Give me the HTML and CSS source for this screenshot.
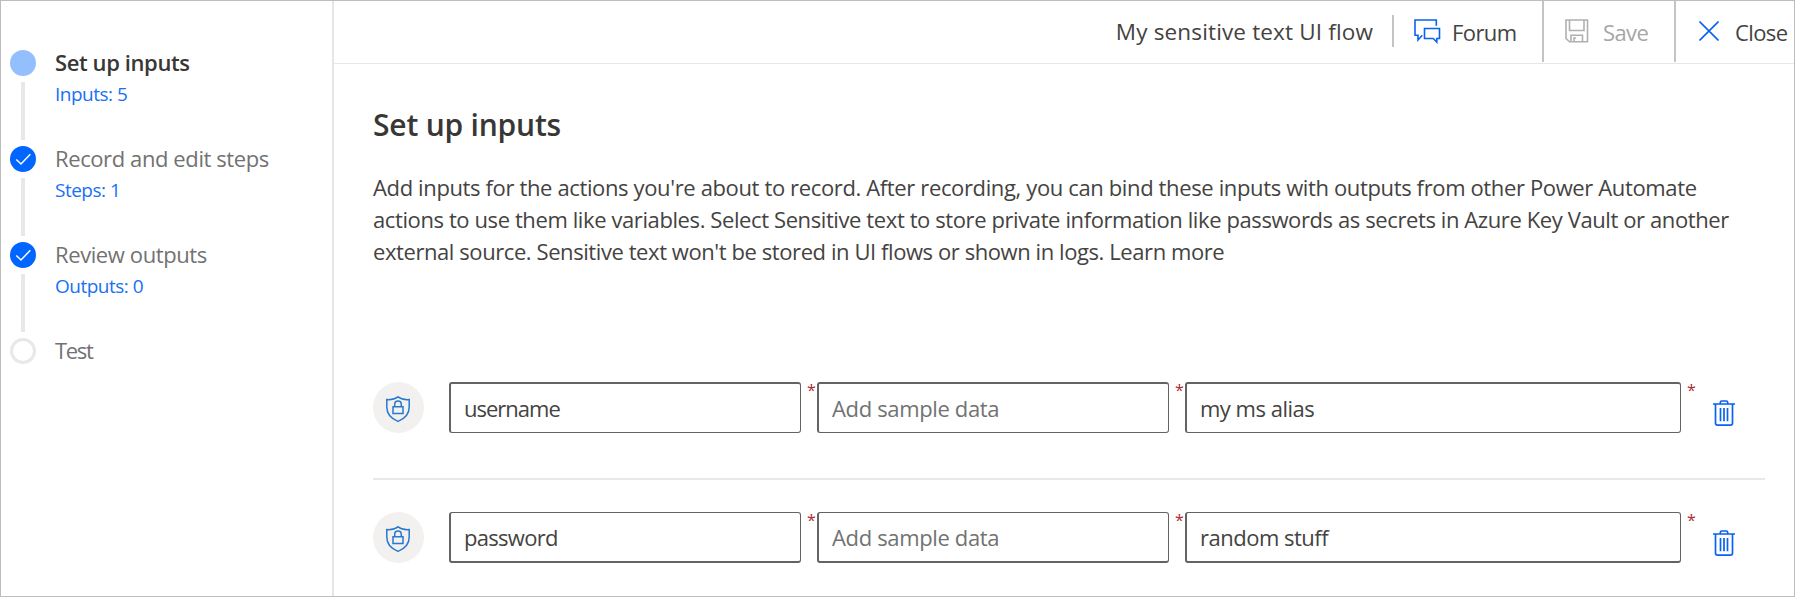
FILE: index.html
```
<!DOCTYPE html>
<html lang="en">
<head>
<meta charset="utf-8">
<title>My sensitive text UI flow</title>
<link rel="stylesheet" href="styles.css">
</head>
<body>
<svg class="defs" aria-hidden="true">
  <symbol id="shield" viewBox="0 0 26 28">
    <path d="M13 1.8C10.3 3.8 5.5 4.9 1.8 4.6V12C1.8 18.5 6.5 23.8 13 26.4C19.5 23.8 24.2 18.500 24.200 12V4.600C20.500 4.900 15.700 3.800 13 1.800Z"/>
    <path d="M8 11.800H18V18.500H8Z"/>
    <path d="M9.700 11.800V9.400A3.300 3.300 0 0 1 16.300 9.400V11.800"/>
  </symbol>
  <symbol id="trash" viewBox="0 0 22 26">
    <path d="M0 4H22M7.300 4V2.500Q7.300 1 8.800 1H13.200Q14.700 1 14.700 2.500V4M2.500 4V23Q2.500 25.100 4.600 25.100H17.400Q19.500 25.100 19.500 23V4"/>
    <path d="M7.500 8V21.200M11 8V21.200M14.500 8V21.200"/>
  </symbol>
  <symbol id="check" viewBox="0 0 26 26">
    <path d="M6.300 13.500L11 18L20.300 8.300"/>
  </symbol>
</svg>
<div class="page">
  <nav class="sidebar">
    <div class="step current">
      <div class="rail"><span class="dot"></span><span class="line"></span></div>
      <div class="label"><div class="name">Set up inputs</div><a class="count">Inputs: 5</a></div>
    </div>
    <div class="step done">
      <div class="rail"><span class="dot"><svg><use href="#check"/></svg></span><span class="line"></span></div>
      <div class="label"><div class="name">Record and edit steps</div><a class="count">Steps: 1</a></div>
    </div>
    <div class="step done">
      <div class="rail"><span class="dot"><svg><use href="#check"/></svg></span><span class="line"></span></div>
      <div class="label"><div class="name">Review outputs</div><a class="count">Outputs: 0</a></div>
    </div>
    <div class="step">
      <div class="rail"><span class="dot"></span></div>
      <div class="label"><div class="name short">Test</div></div>
    </div>
  </nav>
  <div class="main">
    <header class="topbar">
      <span class="flow-title">My sensitive text UI flow</span>
      <span class="divider"></span>
      <div class="action forum">
        <svg class="icon" width="28" height="26" viewBox="0 0 28 26"><path d="M23.300 7.800V2H2V17.300H5V22L9.300 17.300M11.500 10.500H26.500V20.500H23.800V24L20.200 20.500H11.500Z"/></svg>
        <span>Forum</span>
      </div>
      <div class="action save">
        <svg class="icon" width="24" height="24" viewBox="0 0 24 24"><path d="M1 1H22.500V22.800H4.500L1 19.500ZM4.500 1V11.500H19V1M6 22.800V16.300H17.500V22.800M9 22.800V19H11"/></svg>
        <span>Save</span>
      </div>
      <div class="action close">
        <svg class="icon" width="20" height="20" viewBox="0 0 20 20"><path d="M.5.5L19.500 19.500M19.500.5L.5 19.500"/></svg>
        <span>Close</span>
      </div>
    </header>
    <main class="content">
      <h1>Set up inputs</h1>
      <p><span class="lead">Add inputs for the actions you're about to record. After recording, you can bind these inputs with outputs from other Power Automate</span><br>actions to use them like variables. Select Sensitive text to store private information like passwords as secrets in Azure Key Vault or another<br><span class="tail">external source. Sensitive text won't be stored in UI flows or shown in logs. <a>Learn more</a></span></p>
      <div class="row first">
        <span class="type"><svg class="icon"><use href="#shield"/></svg></span>
        <input class="username" value="username"><span class="req">*</span>
        <input placeholder="Add sample data"><span class="req">*</span>
        <input class="wide" value="my ms alias"><span class="req">*</span>
        <svg class="icon trash"><use href="#trash"/></svg>
      </div>
      <div class="row second">
        <span class="type"><svg class="icon"><use href="#shield"/></svg></span>
        <input class="password" value="password"><span class="req">*</span>
        <input placeholder="Add sample data"><span class="req">*</span>
        <input class="wide" value="random stuff"><span class="req">*</span>
        <svg class="icon trash"><use href="#trash"/></svg>
      </div>
    </main>
  </div>
</div>
</body>
</html>
```
FILE: styles.css
```
* { box-sizing: border-box; }
body {
  margin: 0;
  font: 22px/32px "Open Sans", "Noto Sans", sans-serif;
  letter-spacing: -0.4px;
  color: #444341;
  background: #fff;
}
svg { display: block; fill: none; }
.defs { position: absolute; width: 0; height: 0; }
.page {
  display: flex;
  width: 1795px;
  height: 597px;
  border: 1px solid #bdbdbd;
  overflow: hidden;
}

/* Step navigation */
.sidebar {
  flex: none;
  width: 333px;
  padding: 49px 0 0 9px;
  border-right: 2px solid #e6e6e6;
}
.step { display: flex; gap: 19px; height: 96px; }
.rail { display: flex; flex-direction: column; align-items: center; gap: 6px; width: 26px; }
.dot { width: 26px; height: 26px; border-radius: 50%; border: 3px solid #e8e8e8; }
.current .dot { border: 0; background: #94bfff; }
.done .dot { border: 0; background: #0066ff; }
.dot svg { width: 26px; height: 26px; stroke: #fff; stroke-width: 1.5; }
.line { width: 4px; height: 58px; background: #e8e8e8; }
.name { line-height: 24px; color: #727272; white-space: nowrap; }
.name.short { letter-spacing: -1.3px; }
.current .name { font-weight: 600; color: #383736; }
.count { display: block; margin-top: 7px; font-size: 19px; line-height: 26px; letter-spacing: -.5px; color: #1870f5; }

/* Top bar */
.main { flex: 1; min-width: 0; }
.topbar {
  display: flex;
  justify-content: flex-end;
  align-items: center;
  height: 63px;
  border-bottom: 1px solid #e6e6e6;
}
.flow-title { margin-right: 19px; font-size: 22.5px; letter-spacing: .15px; }
.divider { width: 2px; height: 32px; margin-top: -2px; background: #c4c4c4; }
.action { display: flex; align-items: center; height: 61px; align-self: flex-start; }
.action span { letter-spacing: -.6px; }
.icon { flex: none; stroke: #0a62f0; stroke-width: 1.6; }
.forum { width: 148px; padding-left: 19px; gap: 11px; }
.forum .icon { margin-top: -2px; }
.save { width: 132px; padding-left: 21px; gap: 14px; border-left: 2px solid #c4c4c4; color: #a6a6a6; }
.save .icon { margin-top: -2px; stroke: #b0b0b0; }
.close { width: 120px; padding-left: 23px; gap: 16px; border-left: 2px solid #c4c4c4; }
.close .icon { margin-top: -2px; }

/* Inputs form */
.content { padding: 40px 29px 0 39px; }
h1 { margin: 0; font-size: 30px; line-height: 41px; font-weight: 600; letter-spacing: -.2px; color: #383736; }
p { margin: 26px 0 115px; white-space: nowrap; }
.lead { letter-spacing: -.365px; }
.tail { letter-spacing: -.42px; }
.row { display: flex; height: 51px; }
.row.first { height: 98px; padding-bottom: 45px; border-bottom: 2px solid #e8e8e8; margin-bottom: 32px; }
.type { width: 51px; height: 51px; margin-right: 25px; padding: 13px 0 0 12px; border-radius: 50%; background: #f2f1f0; }
.type svg { width: 26px; height: 28px; stroke: #2878d0; stroke-width: 1.5; }
input {
  width: 352px;
  height: 51px;
  padding: 0 13px;
  border: solid #636363;
  border-width: 2px 1px 1px 2px;
  border-radius: 3px;
  outline: 0;
  background: #fff;
  color: #444341;
  font: inherit;
  letter-spacing: -.5px;
}
.second input { border-width: 1px 1px 2px 2px; }
input::placeholder { color: #727272; letter-spacing: -.35px; }
input.wide { width: 496px; }
input.username { letter-spacing: -1px; }
input.password { letter-spacing: -.7px; }
.req { width: 16px; padding-left: 6px; font-size: 16px; line-height: 16px; letter-spacing: 0; color: #b02a30; }
.trash { width: 22px; height: 26px; margin: 18px 0 0 16px; stroke-width: 1.7; }
```
